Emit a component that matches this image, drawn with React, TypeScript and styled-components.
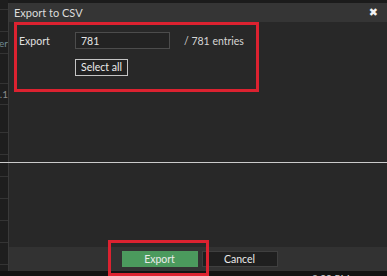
import React from 'react';
import styled, { createGlobalStyle } from 'styled-components';

const GlobalStyle = createGlobalStyle`
    html, body {
        margin: 0;
        padding: 0;
        background: #1b1b1b;
    }
    body {
        font-family: Lato, "Open Sans", sans-serif;
    }
`;

const Page = styled.div`
    position: relative;
    width: 387px;
    height: 276px;
    overflow: hidden;
    display: flex;
    flex-direction: column;
    background: #1b1b1b;
    color: #e2e2e2;
`;

const Main = styled.div`
    flex: 1;
    display: flex;
    min-height: 0;
`;

const SideTable = styled.div`
    width: 8px;
    flex-shrink: 0;
    padding-top: 9px;
    overflow: hidden;
    background: #1e1e1e;
`;

const Cell = styled.div<{ h: number; tone?: string }>`
    height: ${(p) => p.h}px;
    border-top: 1px solid #343434;
    display: flex;
    align-items: center;
    justify-content: flex-end;
    white-space: nowrap;
    font-size: 10px;
    color: ${(p) => p.tone || '#8a8a8a'};
`;

const Dialog = styled.div`
    flex: 1;
    margin-top: 3px;
    margin-right: -3px;
    display: flex;
    flex-direction: column;
    border-left: 1px solid #3a3a3a;
    background: #282828;
`;

const TitleBar = styled.div`
    height: 19px;
    display: flex;
    align-items: center;
    justify-content: space-between;
    padding: 0 12px 0 5px;
    background: #353535;
    font-size: 11px;
    color: #dcdcdc;
`;

const CloseButton = styled.span`
    font-size: 11px;
    color: #f2f2f2;
    line-height: 1;
    font-family: "DejaVu Sans", sans-serif;
`;

const Body = styled.div`
    flex: 1;
    padding-left: 5px;
`;

const Highlight = styled.div`
    width: 237px;
    height: 57px;
    border: 3px solid #dc2230;
    padding: 7px 0 0 2px;
    box-sizing: content-box;
    display: flex;
    flex-direction: column;
    gap: 10px;
`;

const FormRow = styled.div`
    display: flex;
    align-items: center;
    font-size: 10.5px;
`;

const Label = styled.span<{ w?: number }>`
    width: ${(p) => p.w ?? 56}px;
    flex-shrink: 0;
    color: #e0e0e0;
`;

const CountInput = styled.input`
    width: 95px;
    height: 17px;
    box-sizing: border-box;
    margin: 0 14px 0 0;
    padding: 0 5px;
    background: #232323;
    border: 1px solid #4c4c4c;
    color: #e6e6e6;
    font-family: inherit;
    font-size: 10.5px;
    outline: none;
`;

const Total = styled.span`
    color: #d6d6d6;
`;

const SelectAll = styled.button`
    height: 17px;
    padding: 0 5px;
    background: #222;
    border: 1px solid #c4c4c4;
    color: #ececec;
    font-family: inherit;
    font-size: 10.5px;
    line-height: 1;
`;

const Footer = styled.div`
    position: relative;
    height: 24px;
    display: flex;
    justify-content: center;
    align-items: flex-start;
    gap: 4px;
    padding-top: 4px;
    box-sizing: border-box;
    background: #323232;
`;

const FooterButton = styled.button<{ primary?: boolean }>`
    width: 76px;
    height: 16px;
    padding: 0;
    border: 1px solid ${(p) => (p.primary ? '#4d9a5e' : '#3f3f3f')};
    background: ${(p) => (p.primary ? '#4b9a5d' : '#1f1f1f')};
    color: #eaeaea;
    font-family: inherit;
    font-size: 10.5px;
    line-height: 1;
`;

const FooterHighlight = styled.div`
    position: absolute;
    left: 99px;
    top: -7px;
    width: 101px;
    height: 36px;
    box-sizing: border-box;
    border: 3px solid #dc2230;
    pointer-events: none;
`;

const BottomStrip = styled.div`
    height: 5px;
    flex-shrink: 0;
    background: #121212;
    overflow: hidden;
    padding-left: 312px;
    font-size: 10px;
    line-height: 14px;
    color: #cfcfcf;
`;

const CrossLine = styled.div`
    position: absolute;
    left: 0;
    right: 0;
    top: 162px;
    height: 1px;
    background: #cbcbcb;
`;

const sideRows = [
    { h: 21, text: '' },
    { h: 21, text: 'Number', tone: '#6f8b97' },
    { h: 29, text: '' },
    { h: 20, text: '13.1' },
    { h: 27, text: '' },
    { h: 21, text: '' },
    { h: 21, text: '' },
    { h: 21, text: '' },
    { h: 21, text: '' },
    { h: 21, text: '' },
    { h: 21, text: '' },
    { h: 21, text: '' },
];

const App: React.FC = (): JSX.Element => {
    return (
        <Page>
            <GlobalStyle />
            <Main>
                <SideTable>
                    {sideRows.map((r, i) => (
                        <Cell key={i} h={r.h} tone={r.tone}>
                            {r.text}
                        </Cell>
                    ))}
                </SideTable>
                <Dialog>
                    <TitleBar>
                        <span>Export to CSV</span>
                        <CloseButton>✖</CloseButton>
                    </TitleBar>
                    <Body>
                        <Highlight>
                            <FormRow>
                                <Label>Export</Label>
                                <CountInput defaultValue="781" />
                                <Total>/ 781 entries</Total>
                            </FormRow>
                            <FormRow>
                                <Label />
                                <SelectAll>Select all</SelectAll>
                            </FormRow>
                        </Highlight>
                    </Body>
                    <Footer>
                        <FooterButton primary>Export</FooterButton>
                        <FooterButton>Cancel</FooterButton>
                        <FooterHighlight />
                    </Footer>
                </Dialog>
            </Main>
            <BottomStrip>3:00 PM</BottomStrip>
            <CrossLine />
        </Page>
    );
};

export default App;
